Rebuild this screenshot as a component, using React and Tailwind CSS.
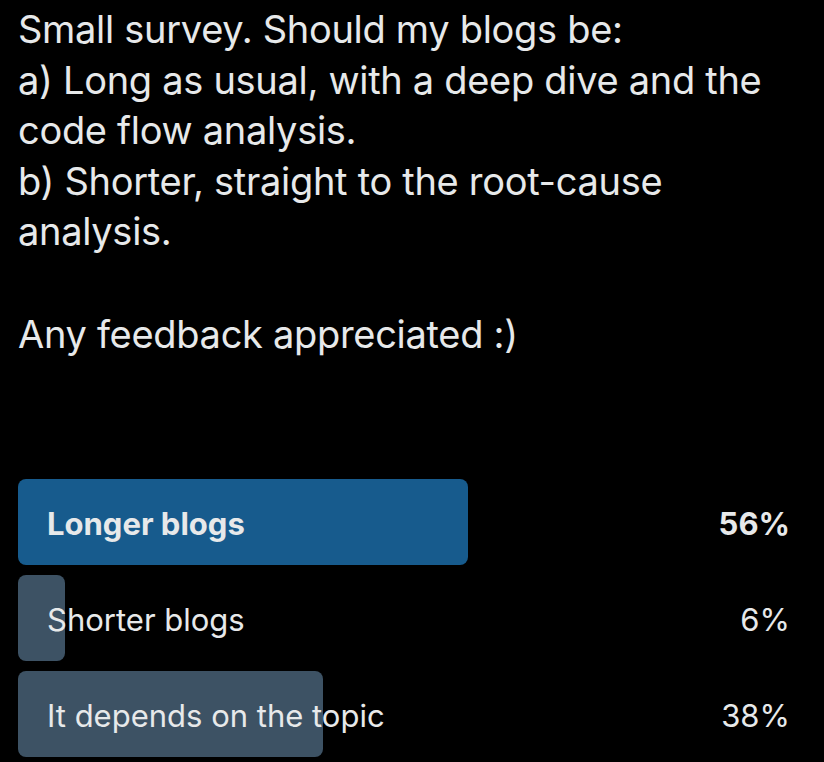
const options = [
  { label: "Longer blogs", pct: 56, width: 450, winner: true },
  { label: "Shorter blogs", pct: 6, width: 47 },
  { label: "It depends on the topic", pct: 38, width: 305 },
];

export default function App() {
  return (
    <div
      className="h-[762px] w-[824px] overflow-hidden bg-black text-[#e7e9ea]"
      style={{ fontFamily: "Inter, 'Noto Sans', sans-serif" }}
    >
      <div className="px-[18px] pt-[4px] text-[38px] leading-[50.5px] tracking-[-0.3px]">
        <div>Small survey. Should my blogs be:</div>
        <div>a) Long as usual, with a deep dive and the</div>
        <div>code flow analysis.</div>
        <div>b) Shorter, straight to the root-cause</div>
        <div>analysis.</div>
        <div className="h-[52px]" />
        <div>Any feedback appreciated :)</div>
      </div>

      <div className="mt-[120px] flex flex-col gap-[10px] pl-[18px] pr-[34px]">
        {options.map((o) => (
          <div key={o.label} className="relative flex h-[86px] items-center">
            <div
              className={
                "absolute left-0 top-0 h-full rounded-[8px] " +
                (o.winner ? "bg-[#175b8d]" : "bg-[#3d5264]")
              }
              style={{ width: o.width }}
            />
            <div
              className={
                "relative flex w-full items-center justify-between pl-[29px] pt-[4px] text-[31px] " +
                (o.winner ? "font-bold" : "")
              }
            >
              <span>{o.label}</span>
              <span>{o.pct}%</span>
            </div>
          </div>
        ))}
      </div>
    </div>
  );
}
